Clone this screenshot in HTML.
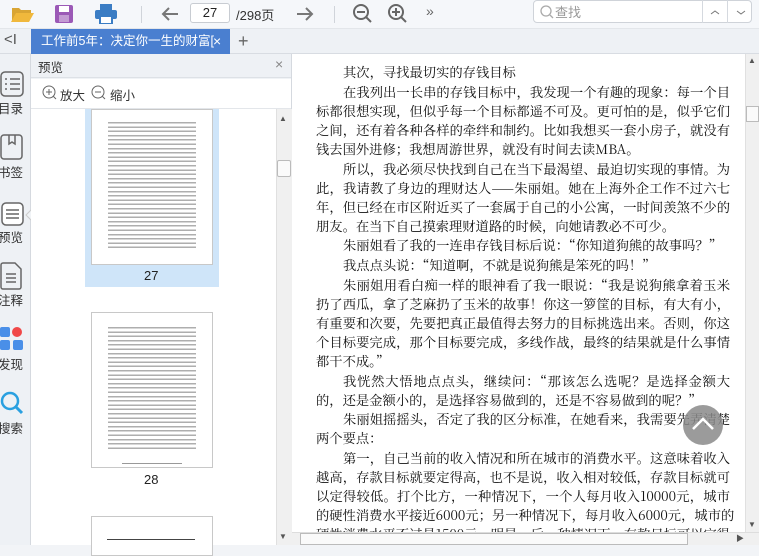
<!DOCTYPE html>
<html><head><meta charset="utf-8"><style>
*{margin:0;padding:0;box-sizing:border-box}
body{width:759px;height:545px;overflow:hidden;background:#f2f4f7;font-family:"Liberation Sans","Noto Sans CJK SC",sans-serif;position:relative}
.abs{position:absolute}
.tb{left:0;top:0;width:759px;height:29px;background:#f5f7fa;border-bottom:1px solid #e3e6ea}
.tabbar{left:0;top:29px;width:759px;height:25px;background:#eef1f5;border-bottom:1px solid #d8dce2}
.tab{left:31px;top:29px;width:199px;height:25px;background:#4a7fd0;color:#fff;font-size:12.5px;line-height:25px;padding-left:10px;white-space:nowrap;overflow:hidden}
.side{left:0;top:54px;width:31px;height:491px;background:#eef1f5;border-right:1px solid #d5d9df}
.side .lb{position:absolute;left:-2px;font-size:12.5px;color:#333}
.panel{left:31px;top:54px;width:261px;height:491px;background:#f0f3f6;border-right:1px solid #d5d9df}
.doc{left:292px;top:54px;width:453px;height:478px;background:#fff;overflow:hidden}
.txt{position:absolute;left:24px;width:414px;font-family:"Noto Serif CJK SC",serif;font-size:13.3px;color:#111;line-height:19px}
.txt p{margin-bottom:0.75px}
.txt .j{text-align:justify;text-align-last:justify;display:block;white-space:nowrap}
.i{text-indent:27px}
.pg{position:absolute;background:#fff;border:1px solid #c8c8c8}
.lines{position:absolute;left:16px;right:16px;background:repeating-linear-gradient(#9a9a9a 0 1.5px,transparent 1.5px 4.3px);opacity:.8}
</style></head><body>
<div class="abs tb"></div>
<svg class="abs" style="left:10px;top:4px" width="26" height="20"><path d="M2 4h7l2 2h10v3H7L2 17z" fill="#d9a534"/><path d="M6 9h18l-5 9H1z" fill="#f0b83c"/></svg>
<svg class="abs" style="left:54px;top:4px" width="20" height="20"><rect x="1" y="1" width="18" height="18" rx="2" fill="#9b59b6"/><rect x="5" y="2" width="10" height="6" fill="#fff"/><rect x="5" y="11" width="10" height="7" fill="#c39bd3"/></svg>
<svg class="abs" style="left:95px;top:4px" width="22" height="20"><rect x="5" y="0" width="12" height="6" fill="#3b7dc4"/><rect x="0" y="6" width="22" height="9" rx="2" fill="#3b7dc4"/><rect x="5" y="12" width="12" height="8" fill="#fff" stroke="#3b7dc4" stroke-width="2"/></svg>
<div class="abs" style="left:141px;top:6px;width:1px;height:17px;background:#d0d4da"></div>
<svg class="abs" style="left:160px;top:5px" width="20" height="18"><path d="M18 9H3M9 3L3 9l6 6" stroke="#777" stroke-width="2" fill="none"/></svg>
<div class="abs" style="left:190px;top:3px;width:40px;height:20px;border:1px solid #c8ccd2;border-radius:3px;background:#fff;font-size:13px;text-align:center;line-height:18px;color:#222">27</div>
<div class="abs" style="left:236px;top:5px;font-size:13px;color:#333">/298页</div>
<svg class="abs" style="left:295px;top:5px" width="20" height="18"><path d="M2 9h15M11 3l6 6-6 6" stroke="#777" stroke-width="2" fill="none"/></svg>
<div class="abs" style="left:334px;top:6px;width:1px;height:17px;background:#d0d4da"></div>
<svg class="abs" style="left:352px;top:3px" width="22" height="22"><circle cx="9" cy="9" r="7" stroke="#666" stroke-width="2" fill="none"/><path d="M5 9h8M14 14l5 5" stroke="#666" stroke-width="2"/></svg>
<svg class="abs" style="left:387px;top:3px" width="22" height="22"><circle cx="9" cy="9" r="7" stroke="#666" stroke-width="2" fill="none"/><path d="M5 9h8M9 5v8M14 14l5 5" stroke="#666" stroke-width="2"/></svg>
<div class="abs" style="left:426px;top:3px;font-size:14px;color:#666">»</div>
<div class="abs" style="left:533px;top:0px;width:219px;height:23px;border:1px solid #cfd3d9;border-radius:4px;background:#fff"></div>
<svg class="abs" style="left:539px;top:4px" width="16" height="16"><circle cx="7" cy="7" r="5" stroke="#aaa" stroke-width="1.3" fill="none"/><path d="M11 11l3 3" stroke="#aaa" stroke-width="1.3"/></svg>
<div class="abs" style="left:555px;top:2px;font-size:13px;color:#999">查找</div>
<div class="abs" style="left:702px;top:0;width:1px;height:23px;background:#d5d9df"></div>
<div class="abs" style="left:727px;top:0;width:1px;height:23px;background:#d5d9df"></div>
<svg class="abs" style="left:708px;top:7px" width="40" height="10"><path d="M3 7l4-3 4 3" stroke="#777" fill="none"/><path d="M29 4l4 3 4-3" stroke="#777" fill="none"/></svg>

<div class="abs tabbar"></div>
<div class="abs" style="left:4px;top:31px;font-size:15px;color:#555">&lt;I</div>
<div class="abs tab">工作前5年：决定你一生的财富[<span style="position:absolute;left:182px;top:0;font-size:14px">×</span></div>
<div class="abs" style="left:238px;top:29px;font-size:18px;color:#666;line-height:25px">+</div>

<div class="abs side">
<svg class="abs" style="left:0;top:17px" width="24" height="28"><rect x="1" y="1" width="22" height="24" rx="4" stroke="#666" stroke-width="1.5" fill="none"/><path d="M5 8h2M10 8h10M5 13h2M10 13h10M5 18h2M10 18h10" stroke="#666" stroke-width="1.5"/></svg>
<div class="lb" style="top:44px">目录</div>
<svg class="abs" style="left:0;top:80px" width="24" height="28"><rect x="1" y="1" width="21" height="24" rx="3" stroke="#666" stroke-width="1.5" fill="none"/><path d="M9 1v9l3-2 3 2V1" stroke="#666" stroke-width="1.5" fill="none"/></svg>
<div class="lb" style="top:108px">书签</div>
<svg class="abs" style="left:0;top:145px" width="31" height="30"><rect x="2" y="4" width="21" height="22" rx="4" stroke="#666" stroke-width="1.5" fill="#fff"/><path d="M6 11h13M6 15h13M6 19h13" stroke="#666" stroke-width="1.5"/><path d="M31 11l-5 5 5 5" fill="#f0f3f6" stroke="#ccc"/></svg>
<div class="lb" style="top:173px">预览</div>
<svg class="abs" style="left:0;top:208px" width="24" height="30"><path d="M1 3a2 2 0 0 1 2-2h12l6 6v18a2 2 0 0 1-2 2H3a2 2 0 0 1-2-2z" stroke="#666" stroke-width="1.5" fill="none"/><path d="M6 12h10M6 16h10M6 20h10" stroke="#666" stroke-width="1.5"/></svg>
<div class="lb" style="top:236px">注释</div>
<svg class="abs" style="left:0;top:272px" width="24" height="26"><rect x="0" y="1" width="10" height="10" rx="2" fill="#4a8fe8"/><circle cx="17" cy="6" r="5" fill="#f04848"/><rect x="0" y="14" width="10" height="10" rx="2" fill="#4a8fe8"/><rect x="13" y="14" width="10" height="10" rx="2" fill="#4a8fe8"/></svg>
<div class="lb" style="top:300px">发现</div>
<svg class="abs" style="left:0;top:337px" width="26" height="28"><circle cx="10" cy="10" r="8" stroke="#2aa0e0" stroke-width="2.5" fill="none"/><path d="M16 16l6 6" stroke="#2aa0e0" stroke-width="3"/></svg>
<div class="lb" style="top:364px">搜索</div>
</div>

<div class="abs panel">
<div class="abs" style="left:0;top:0;width:260px;height:24px;border-bottom:1px solid #dde1e6;background:#eef1f5"></div>
<div class="abs" style="left:7px;top:3px;font-size:12.5px;color:#333">预览</div>
<div class="abs" style="left:244px;top:2px;font-size:14px;color:#888">×</div>
<div class="abs" style="left:0;top:25px;width:260px;height:30px;background:#fff;border-bottom:1px solid #e3e6ea"></div>
<svg class="abs" style="left:11px;top:31px" width="16" height="16"><circle cx="7" cy="7" r="6" stroke="#666" fill="none"/><path d="M4 7h6M7 4v6M11 11l3 3" stroke="#666"/></svg>
<div class="abs" style="left:29px;top:31px;font-size:12.5px;color:#333">放大</div>
<svg class="abs" style="left:60px;top:31px" width="16" height="16"><circle cx="7" cy="7" r="6" stroke="#666" fill="none"/><path d="M4 7h6M11 11l3 3" stroke="#666"/></svg>
<div class="abs" style="left:79px;top:31px;font-size:12.5px;color:#333">缩小</div>
<div class="abs" style="left:0;top:55px;width:245px;height:436px;background:#fff"></div>
<div class="abs" style="left:54px;top:55px;width:134px;height:178px;background:#cfe5f9"></div>
<div class="pg" style="left:60px;top:55px;width:122px;height:156px"><div class="lines" style="top:12px;height:128px"></div></div>
<div class="abs" style="left:113px;top:214px;font-size:13px;color:#222">27</div>
<div class="pg" style="left:60px;top:258px;width:122px;height:156px"><div class="lines" style="top:14px;height:122px"></div><div class="abs" style="left:30px;top:150px;width:60px;height:1px;background:#999"></div></div>
<div class="abs" style="left:113px;top:418px;font-size:13px;color:#222">28</div>
<div class="pg" style="left:60px;top:462px;width:122px;height:40px"><div class="abs" style="left:15px;top:22px;width:88px;height:1px;background:#444"></div></div>
<div class="abs" style="left:245px;top:55px;width:16px;height:436px;background:#f0f0f0;border-left:1px solid #e0e0e0"></div>
<div class="abs" style="left:246px;top:106px;width:14px;height:17px;background:#fafafa;border:1px solid #bbb;border-radius:2px"></div>
<div class="abs" style="left:248px;top:60px;font-size:8px;color:#555">▲</div>
<div class="abs" style="left:248px;top:478px;font-size:8px;color:#555">▼</div>
</div>

<div class="abs doc">
<div class="txt" style="top:8px">
<p class="i">其次，寻找最切实的存钱目标</p>
<p><span class="j i">在我列出一长串的存钱目标中，我发现一个有趣的现象：每一个目</span><span class="j">标都很想实现，但似乎每一个目标都遥不可及。更可怕的是，似乎它们</span><span class="j">之间，还有着各种各样的牵绊和制约。比如我想买一套小房子，就没有</span>钱去国外进修；我想周游世界，就没有时间去读MBA。</p>
<p><span class="j i">所以，我必须尽快找到自己在当下最渴望、最迫切实现的事情。为</span><span class="j">此，我请教了身边的理财达人——朱丽姐。她在上海外企工作不过六七</span><span class="j">年，但已经在市区附近买了一套属于自己的小公寓，一时间羡煞不少的</span>朋友。在当下自己摸索理财道路的时候，向她请教必不可少。</p>
<p class="i">朱丽姐看了我的一连串存钱目标后说：“你知道狗熊的故事吗？”</p>
<p class="i">我点点头说：“知道啊，不就是说狗熊是笨死的吗！”</p>
<p><span class="j i">朱丽姐用看白痴一样的眼神看了我一眼说：“我是说狗熊拿着玉米</span><span class="j">扔了西瓜，拿了芝麻扔了玉米的故事！你这一箩筐的目标，有大有小，</span><span class="j">有重要和次要，先要把真正最值得去努力的目标挑选出来。否则，你这</span><span class="j">个目标要完成，那个目标要完成，多线作战，最终的结果就是什么事情</span>都干不成。”</p>
<p><span class="j i">我恍然大悟地点点头，继续问：“那该怎么选呢？是选择金额大</span>的，还是金额小的，是选择容易做到的，还是不容易做到的呢？”</p>
<p><span class="j i">朱丽姐摇摇头，否定了我的区分标准，在她看来，我需要先弄清楚</span>两个要点：</p>
<p><span class="j i">第一，自己当前的收入情况和所在城市的消费水平。这意味着收入</span><span class="j">越高，存款目标就要定得高，也不是说，收入相对较低，存款目标就可</span><span class="j">以定得较低。打个比方，一种情况下，一个人每月收入10000元，城市</span><span class="j">的硬性消费水平接近6000元；另一种情况下，每月收入6000元，城市的</span><span class="j">硬性消费水平不过是1500元。明显，后一种情况下，存款目标可以定得</span></p>
</div>
</div>
<svg class="abs" style="left:683px;top:405px" width="40" height="40"><circle cx="20" cy="20" r="20" fill="#8a8a8a" opacity=".85"/><path d="M10 24l10-10 10 10" stroke="#fff" stroke-width="2.5" fill="none"/></svg>
<div class="abs" style="left:745px;top:54px;width:14px;height:478px;background:#f0f0f0;border-left:1px solid #e0e0e0"></div>
<div class="abs" style="left:748px;top:56px;font-size:8px;color:#555">▲</div>
<div class="abs" style="left:746px;top:106px;width:13px;height:16px;background:#fafafa;border:1px solid #bbb"></div>
<div class="abs" style="left:748px;top:520px;font-size:8px;color:#555">▼</div>
<div class="abs" style="left:292px;top:532px;width:467px;height:13px;background:#f0f0f0;border-top:1px solid #ddd"></div>
<div class="abs" style="left:300px;top:533px;width:388px;height:12px;background:#fafafa;border:1px solid #bbb"></div>
<div class="abs" style="left:736px;top:533px;font-size:8px;color:#555">▶</div>
</body></html>
